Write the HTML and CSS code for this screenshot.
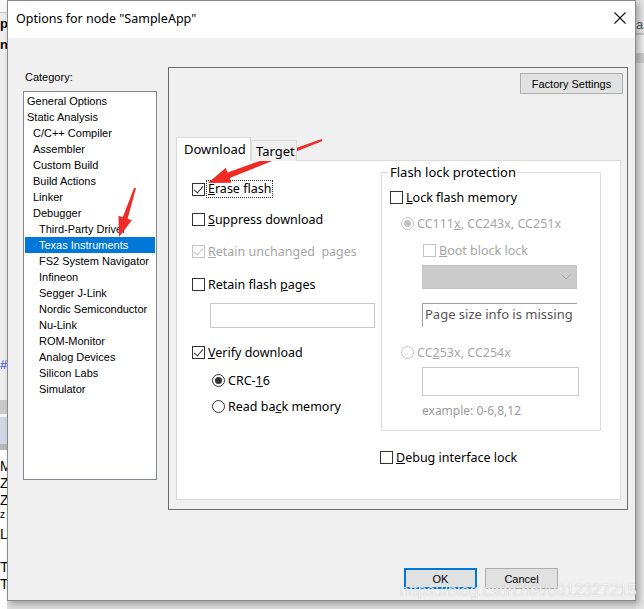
FILE: index.html
```html
<!DOCTYPE html>
<html lang="en">
<head>
  <meta charset="UTF-8" />
  <title>Options for node "SampleApp"</title>
  <link rel="stylesheet" href="styles.css">
</head>
<body>
  <div class="desk">
    <div class="desk-left">
      <div class="bg-top"></div>
      <div class="bg-line">p</div>
      <div class="bg-line">ni</div>
      <div class="bg-gap"></div>
      <div class="bg-hash">#</div>
      <div class="bg-bars"></div>
      <div class="bg-text">
        <span>M</span><span>Z</span><span>Z</span><span class="small">z</span><span>L</span>
        <span class="skip">T</span><span>T</span>
      </div>
    </div>

    <div class="dialog">
      <div class="titlebar">
        <span class="title">Options for node "SampleApp"</span>
        <svg class="close" width="12" height="12" viewBox="0 0 12 12">
          <path d="M0.5 0.5 L11.5 11.5 M11.5 0.5 L0.5 11.5" stroke="#111" stroke-width="1.1" fill="none"/>
        </svg>
      </div>

      <div class="content">
        <div class="category">
          <div class="cat-label">Category:</div>
          <ul class="cat-list">
            <li>General Options</li>
            <li>Static Analysis</li>
            <li class="l1">C/C++ Compiler</li>
            <li class="l1">Assembler</li>
            <li class="l1">Custom Build</li>
            <li class="l1">Build Actions</li>
            <li class="l1">Linker</li>
            <li class="l1">Debugger</li>
            <li class="l2">Third-Party Driver</li>
            <li class="l2 sel">Texas Instruments</li>
            <li class="l2">FS2 System Navigator</li>
            <li class="l2">Infineon</li>
            <li class="l2">Segger J-Link</li>
            <li class="l2">Nordic Semiconductor</li>
            <li class="l2">Nu-Link</li>
            <li class="l2">ROM-Monitor</li>
            <li class="l2">Analog Devices</li>
            <li class="l2">Silicon Labs</li>
            <li class="l2">Simulator</li>
          </ul>
        </div>

        <div class="frame">
          <button class="btn factory">Factory Settings</button>

          <div class="tabs">
            <div class="tab active">Download</div>
            <div class="tab">Target</div>
          </div>

          <div class="panel">
            <div class="col-left">
              <div class="opt r-erase"><span class="cb on"></span><span class="lbl focus"><u>E</u>rase flash</span></div>
              <div class="opt r-suppress"><span class="cb"></span><span class="lbl"><u>S</u>uppress download</span></div>
              <div class="opt r-retain off"><span class="cb on"></span><span class="lbl"><u>R</u>etain unchanged&nbsp; pages</span></div>
              <div class="opt r-flash"><span class="cb"></span><span class="lbl">Retain flash <u>p</u>ages</span></div>
              <div class="field pages-field"></div>
              <div class="opt r-verify"><span class="cb on"></span><span class="lbl"><u>V</u>erify download</span></div>
              <div class="opt r-crc"><span class="rb on"></span><span class="lbl">CRC-<u>1</u>6</span></div>
              <div class="opt r-read"><span class="rb"></span><span class="lbl">Read ba<u>c</u>k memory</span></div>
            </div>

            <div class="col-right">
              <fieldset class="group">
                <legend>Flash lock protection</legend>
                <div class="group-body">
                  <div class="opt g-lock"><span class="cb"></span><span class="lbl"><u>L</u>ock flash memory</span></div>
                  <div class="opt g-cc111 off"><span class="rb on"></span><span class="lbl">CC111<u>x</u>, CC243x, CC251x</span></div>
                  <div class="opt g-boot off"><span class="cb"></span><span class="lbl"><u>B</u>oot block lock</span></div>
                  <div class="combo">
                    <svg width="10" height="6" viewBox="0 0 10 6"><path d="M0.5 0.5 L5 5 L9.5 0.5" stroke="#a8a8a8" fill="none"/></svg>
                  </div>
                  <div class="info-box">Page size info is missing</div>
                  <div class="opt g-cc253 off"><span class="rb"></span><span class="lbl">CC<u>2</u>53x, CC254x</span></div>
                  <div class="field range-field"></div>
                  <div class="hint">example: 0-6,8,12</div>
                </div>
              </fieldset>
              <div class="opt g-debug"><span class="cb"></span><span class="lbl"><u>D</u>ebug interface lock</span></div>
            </div>
          </div>
        </div>
      </div>

      <div class="buttons">
        <button class="btn default">OK</button>
        <button class="btn">Cancel</button>
      </div>
    </div>

    <div class="desk-right">
      <div class="bg-a">a</div>
      <div class="bg-rbars"></div>
    </div>
  </div>

  <div class="watermark">https://blog.csdn.net/u012327215</div>

  <!-- red pointer arrows drawn over the dialog -->
  <svg class="marks" width="644" height="609" viewBox="0 0 644 609">
    <polygon fill="#ee2b24" points="321.6,139.1 227.5,172.4 225.8,167.7 208,183 231.4,182.7 229.7,178 322.4,140.9"/>
    <polygon fill="#ee2b24" points="134.1,187.7 122.8,217.2 118.5,215.8 119,237 131.9,220.2 127.6,218.8 136,188.3"/>
  </svg>
</body>
</html>
```

FILE: styles.css
```css
* {
  box-sizing: border-box;
}
body {
  margin: 0;
  width: 644px;
  height: 609px;
  overflow: hidden;
  position: relative;
  background: #dcdcdc;
  font-family: 'Noto Sans', sans-serif;
  color: #000;
}
.desk {
  display: flex;
  height: 609px;
}

/* bits of the IDE window behind the dialog */
.desk-left {
  width: 7px;
  overflow: hidden;
  background: #ededed;
  font: bold 13px 'Liberation Sans', sans-serif;
}
.bg-top {
  height: 13px;
  background: #f8f8f8;
  border-bottom: 1px solid #c8c8c8;
}
.bg-line {
  height: 21px;
  line-height: 21px;
}
.bg-gap {
  height: 295px;
}
.bg-hash {
  color: #1a3ae0;
  font-weight: normal;
  height: 50px;
  line-height: 30px;
}
.bg-bars {
  height: 50px;
  background: linear-gradient(#c9c9c9 0 14px, #f4f4f4 14px 17px, #cfd8e4 17px 44px, #b8b8b8 44px);
}
.bg-text {
  background: #fff;
  height: 200px;
  font-weight: normal;
  font-size: 14px;
  padding-top: 8px;
}
.bg-text span {
  display: block;
  height: 17px;
}
.bg-text .small {
  font-size: 10px;
}
.bg-text .skip {
  margin-top: 16px;
}
.desk-right {
  width: 8px;
  background: #e4e4e4;
  font: 13px 'Liberation Sans', sans-serif;
  color: #555;
}
.bg-a {
  margin-top: 17px;
  height: 16px;
}
.bg-rbars {
  height: 30px;
  background: linear-gradient(#c4c4c4 0 2px, #ececec 2px 20px, #c8c8c8 20px);
}

.dialog {
  width: 629px;
  height: 601px;
  border: 1px solid #8a8a8a;
  background: #f0f0f0;
  display: flex;
  flex-direction: column;
  box-shadow: 3px 3px 6px rgba(0, 0, 0, 0.28);
  position: relative;
}
.titlebar {
  height: 37px;
  background: #fff;
  display: flex;
  align-items: center;
  justify-content: space-between;
  padding: 0 9px 3px 8px;
  font-size: 12.5px;
}
.content {
  display: flex;
  padding: 29px 0 0 15px;
}

/* category tree */
.category {
  width: 134px;
  margin-right: 11px;
  padding-top: 4px;
  font: 11px 'Liberation Sans', sans-serif;
}
.cat-label {
  height: 13px;
  line-height: 13px;
  margin: 0 0 7px 2px;
}
.cat-list {
  list-style: none;
  margin: 0;
  padding: 1px;
  height: 389px;
  background: #fff;
  border: 1px solid #828790;
}
.cat-list li {
  height: 16px;
  line-height: 16px;
  padding-left: 2px;
  white-space: nowrap;
  overflow: hidden;
}
.cat-list .l1 {
  padding-left: 8px;
}
.cat-list .l2 {
  padding-left: 14px;
}
.cat-list .sel {
  background: #0078d7;
  color: #fff;
}

/* option page */
.frame {
  width: 460px;
  height: 443px;
  border: 1px solid #6b6b6b;
  display: flex;
  flex-direction: column;
  padding: 5px 4px 9px 7px;
}
.btn {
  height: 21px;
  width: 73px;
  background: #e1e1e1;
  border: 1px solid #adadad;
  font: 11px 'Liberation Sans', sans-serif;
  color: #000;
  padding: 0;
}
.btn.default {
  border: 2px solid #0078d7;
}
.factory {
  align-self: flex-end;
  width: 103px;
}
.tabs {
  display: flex;
  align-items: flex-end;
  margin-top: 43px;
  margin-bottom: -1px;
  height: 24px;
  position: relative;
  z-index: 1;
}
.tab {
  height: 21px;
  border: 1px solid #d9d9d9;
  border-bottom: none;
  background: #f0f0f0;
  font-size: 13px;
  line-height: 21px;
  padding-left: 4px;
  width: 46px;
}
.tab.active {
  height: 24px;
  width: 75px;
  background: #fff;
  padding-left: 7px;
  line-height: 22px;
}
.panel {
  flex: 1;
  margin-right: 2px;
  background: #fff;
  border: 1px solid #d9d9d9;
  display: flex;
  font-size: 12.5px;
}
.col-left {
  width: 204px;
  padding-left: 15px;
}
.col-right {
  width: 220px;
  padding-top: 3px;
}

/* check boxes and radio buttons */
.opt {
  display: flex;
  align-items: center;
  height: 18px;
  white-space: nowrap;
}
.cb,
.rb {
  flex: none;
  width: 13px;
  height: 13px;
  border: 1px solid #333;
  background: #fff;
  position: relative;
}
.cb.on::after {
  content: '';
  position: absolute;
  left: 3px;
  top: 0px;
  width: 4px;
  height: 8px;
  border: solid #333;
  border-width: 0 1.5px 1.5px 0;
  transform: rotate(40deg);
}
.rb {
  border-radius: 50%;
}
.rb.on::after {
  content: '';
  position: absolute;
  left: 2px;
  top: 2px;
  width: 7px;
  height: 7px;
  border-radius: 50%;
  background: #333;
}
.lbl {
  margin-left: 3px;
}
.lbl.focus {
  margin-left: 1px;
  padding: 0 1px;
  height: 18px;
  line-height: 16px;
  border: 1px dotted #333;
}
.off {
  color: #a6a6a6;
}
.off .cb,
.off .rb {
  border-color: #c4c4c4;
}
.off .cb.on::after {
  border-color: #c4c4c4;
}
.off .rb.on::after {
  background: #c4c4c4;
}

.r-erase { margin-top: 19px; }
.r-suppress { margin-top: 12px; }
.r-retain { margin-top: 14px; }
.r-flash { margin-top: 15px; }
.r-verify { margin-top: 15px; }
.r-crc { margin-top: 10px; margin-left: 20px; }
.r-read { margin-top: 8px; margin-left: 20px; }

.field {
  background: #fff;
  border: 1px solid #c9c9c9;
}
.pages-field {
  width: 165px;
  height: 25px;
  margin: 10px 0 0 18px;
}

/* flash lock group */
.group {
  margin: 0;
  padding: 0;
  width: 220px;
  min-width: 0;
  border: 1px solid #dcdcdc;
}
.group legend {
  margin-left: 7px;
  padding: 0 1px;
  font-size: 13px;
  line-height: 16px;
}
.group-body {
  padding: 0 0 11px 8px;
}
.g-lock { margin-top: 8px; }
.g-cc111 { margin-top: 8px; margin-left: 11px; }
.g-boot { margin-top: 9px; margin-left: 33px; }
.combo {
  width: 155px;
  height: 24px;
  margin: 6px 0 0 32px;
  background: #cccccc;
  border: 1px solid #c4c4c4;
  display: flex;
  align-items: center;
  justify-content: flex-end;
  padding-right: 5px;
}
.info-box {
  width: 155px;
  height: 24px;
  margin: 14px 0 0 32px;
  border-left: 1px solid #a0a0a0;
  border-top: 1px solid #a0a0a0;
  padding-left: 2px;
  line-height: 20px;
  font-size: 13px;
  color: #555;
  white-space: nowrap;
}
.g-cc253 { margin-top: 16px; margin-left: 11px; }
.range-field {
  width: 157px;
  height: 29px;
  margin: 6px 0 0 32px;
}
.hint {
  margin: 7px 0 0 32px;
  height: 16px;
  line-height: 16px;
  font-size: 12px;
  color: #9a9a9a;
}
.g-debug {
  margin: 17px 0 0 -1px;
}

.buttons {
  display: flex;
  justify-content: flex-end;
  gap: 8px;
  margin-top: 58px;
  padding-right: 77px;
}

.watermark {
  position: absolute;
  left: 400px;
  top: 582px;
  font: 16px 'Liberation Sans', sans-serif;
  color: rgba(255, 255, 255, 0.8);
  text-shadow: 0 0 1px rgba(0, 0, 0, 0.25);
  white-space: nowrap;
}
.marks {
  position: absolute;
  left: 0;
  top: 0;
  pointer-events: none;
}
```
